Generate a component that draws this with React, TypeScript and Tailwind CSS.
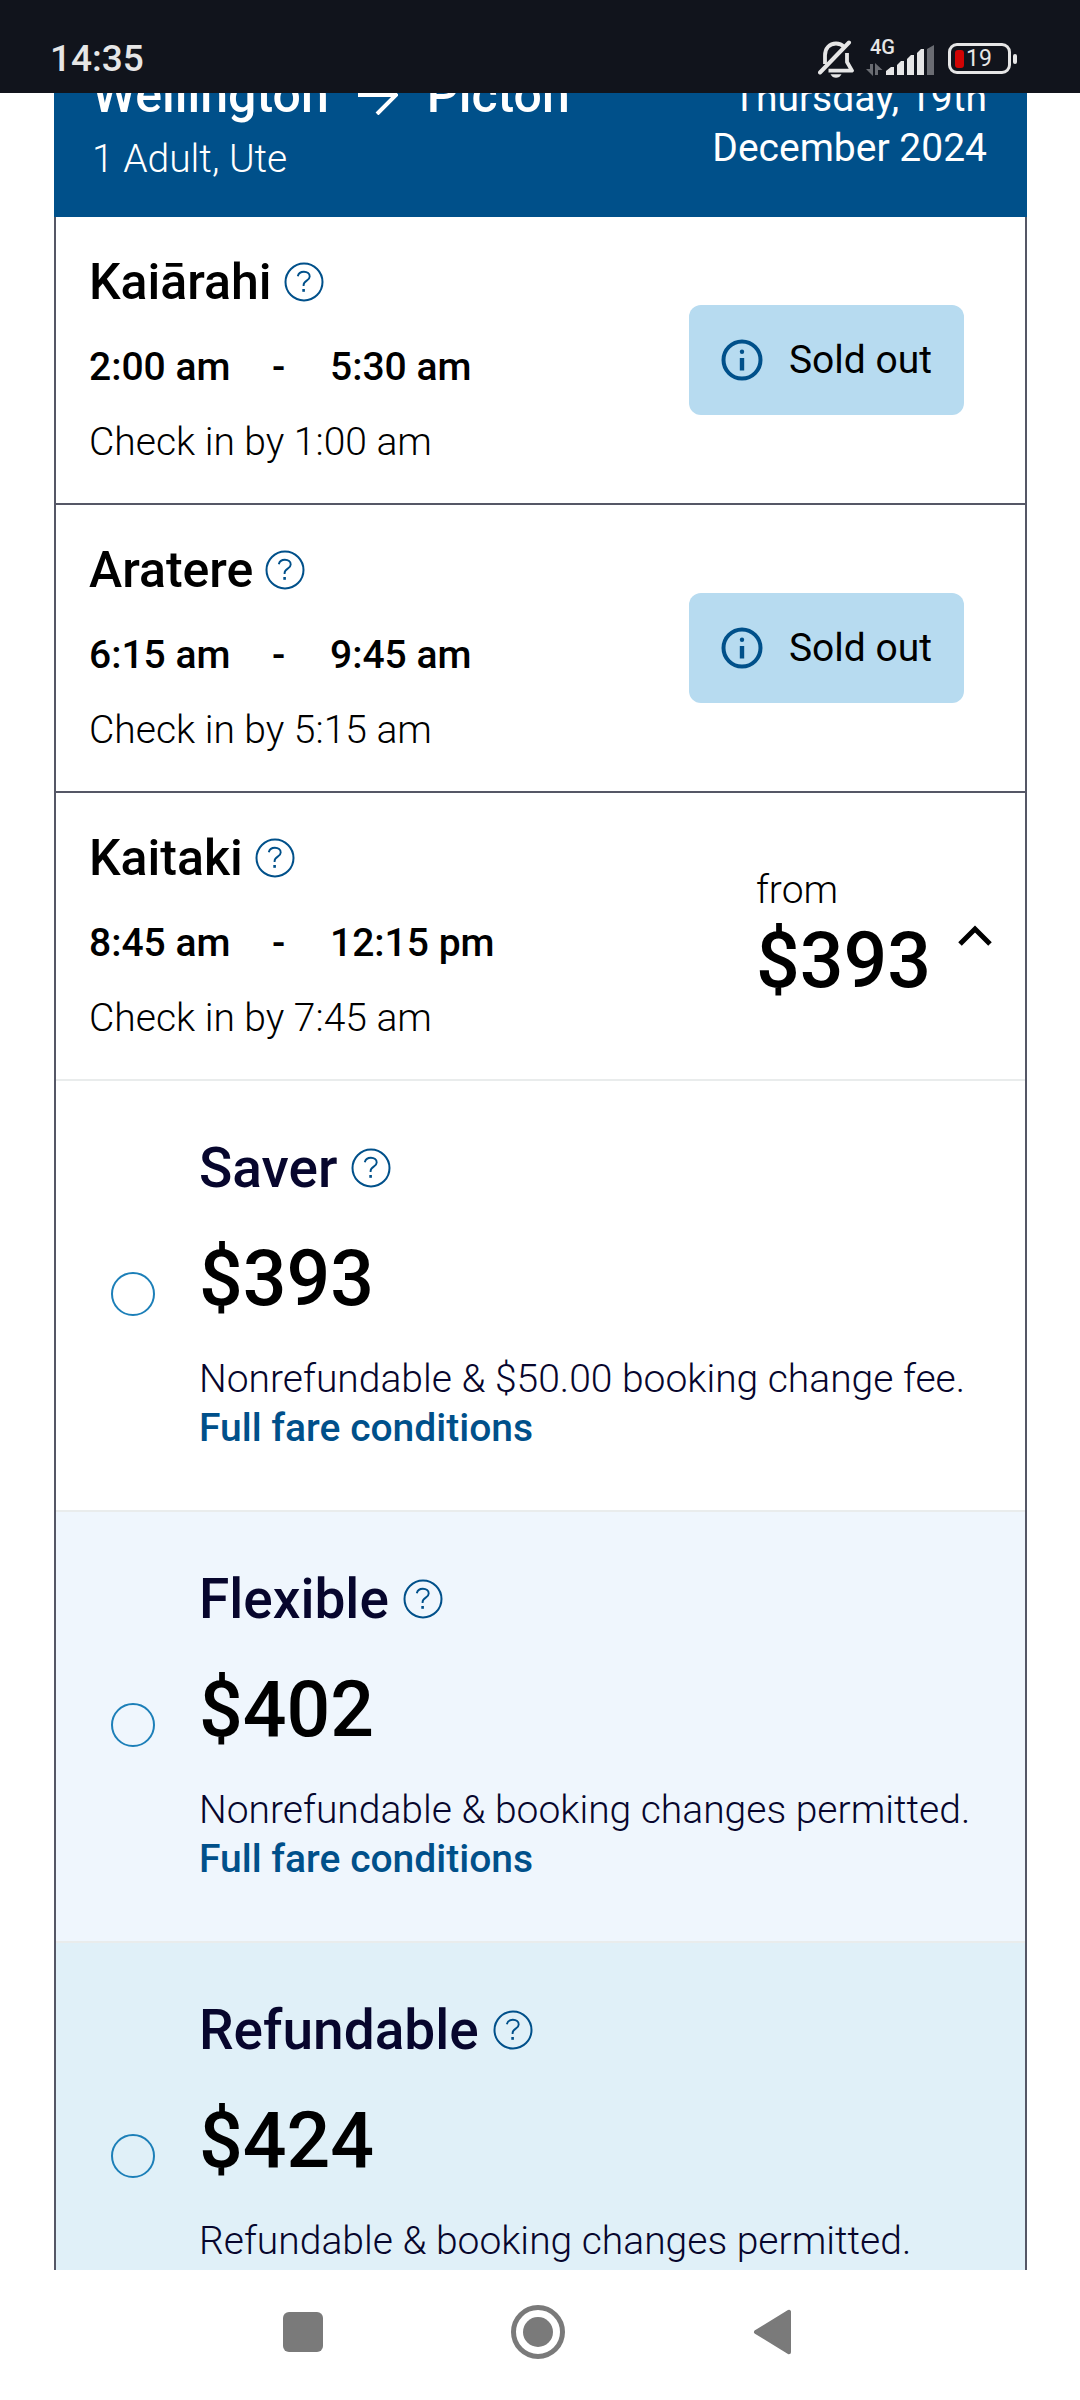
import React, { useState } from 'react';

type Sailing = { ship: string; departs: string; arrives: string; checkIn: string; from?: string };
type Fare = {
  id: string;
  name: string;
  price: string;
  terms: string;
  link?: string;
  tone: string;
};

const sailings: Sailing[] = [
  { ship: 'Kaiārahi', departs: '2:00 am', arrives: '5:30 am', checkIn: '1:00 am' },
  { ship: 'Aratere', departs: '6:15 am', arrives: '9:45 am', checkIn: '5:15 am' },
  { ship: 'Kaitaki', departs: '8:45 am', arrives: '12:15 pm', checkIn: '7:45 am', from: '$393' },
];

const fares: Fare[] = [
  {
    id: 'saver',
    name: 'Saver',
    price: '$393',
    terms: 'Nonrefundable & $50.00 booking change fee.',
    link: 'Full fare conditions',
    tone: 'bg-white',
  },
  {
    id: 'flexible',
    name: 'Flexible',
    price: '$402',
    terms: 'Nonrefundable & booking changes permitted.',
    link: 'Full fare conditions',
    tone: 'bg-[#eff6fd]',
  },
  {
    id: 'refundable',
    name: 'Refundable',
    price: '$424',
    terms: 'Refundable & booking changes permitted.',
    tone: 'bg-[#e0f0f8]',
  },
];

function HelpButton({ about }: { about: string }) {
  return (
    <button type="button" aria-label={`About ${about}`} className="shrink-0 text-[#00508a]">
      <svg className="block size-10" viewBox="0 0 40 40" fill="none" stroke="currentColor">
        <circle cx="20" cy="20" r="18.5" strokeWidth="2" />
        <path d="M13.8 14.2C14.6 11.2 17 9.8 19.9 9.8c3.4 0 5.8 1.9 5.8 4.7 0 4.6-6.1 3.6-6.1 8.6v1" strokeWidth="1.9" />
        <path d="M19.6 27v2.8" strokeWidth="2.6" />
      </svg>
    </button>
  );
}

function StatusBar() {
  return (
    <div className="flex h-[93px] shrink-0 items-center justify-between bg-[#11141c] pt-6 pr-[63px] pl-[50px] text-[#e6e6e6]">
      <time className="text-[37px] leading-[44px] font-medium">14:35</time>
      <div className="flex items-center gap-3">
        <svg className="h-10 w-9" viewBox="0 0 36 40" fill="none" stroke="currentColor" strokeWidth="3.8">
          <path d="M7 25V16.500C7 9 11.500 4.500 18 4.500c3.200 0 6 1.100 8 3.200" />
          <path d="M29 14v9l5 8.600H10.500" strokeLinejoin="round" />
          <path d="M2 33.500 31 3.500" strokeWidth="4" strokeLinecap="round" />
          <path d="M12.500 35.200h11c-1.200 2.400-3.200 3.600-5.500 3.600s-4.300-1.200-5.500-3.600z" fill="currentColor" stroke="none" />
        </svg>
        <div className="relative">
          <span className="absolute -top-1 left-1 text-[20px] leading-5 font-medium">4G</span>
          <svg className="h-9 w-[70px]" viewBox="0 0 70 36">
            <g fill="#6a6c72">
              <path d="M4 23h3v12L0 28h4z" />
              <path d="M9 34V22l7.500 7H12v5z" />
              <path d="M61 8l7-4v30h-7z" />
            </g>
            <path
              fill="currentColor"
              d="M20 30l5-4h3v8h-8zM31 24l4-4h3v14h-7zM41 18l4-4h3v20h-7zM51 12l4-4h3v26h-7z"
            />
          </svg>
        </div>
        <div className="flex items-center gap-0.5">
          <div className="flex h-[31px] w-[63px] items-center gap-0.5 rounded-[9px] border-3 border-[#e6e6e6] pl-1 text-[23px] leading-6">
            <span className="h-[18px] w-[9px] rounded-[3px] bg-[#d00404]" />
            19
          </div>
          <span className="h-[10px] w-1 rounded-sm bg-[#e6e6e6]" />
        </div>
      </div>
    </div>
  );
}

function TripHeader() {
  return (
    <header className="-mt-7 flex justify-between bg-[#00508a] pr-10 pb-[33px] pl-[38px] text-white">
      <div>
        <h1 className="flex items-center gap-[29px] text-[50px] leading-[60px] font-medium">
          Wellington
          <svg className="size-10 shrink-0" viewBox="0 0 40 40" fill="none" stroke="currentColor" strokeWidth="4">
            <path d="M0 20h37M19 1l19 19-19 19" />
          </svg>
          Picton
        </h1>
        <p className="pt-[10px] text-[39px] leading-[49px] font-light">1 Adult, Ute</p>
      </div>
      <p className="pt-2 text-right text-[39px] leading-[50px]">
        Thursday, 19th
        <br />
        December 2024
      </p>
    </header>
  );
}

function SailingRow({ sailing, open, onToggle }: { sailing: Sailing; open: boolean; onToggle: () => void }) {
  const { ship, departs, arrives, checkIn, from } = sailing;
  return (
    <section
      className={
        from
          ? 'flex items-center justify-between border-b-2 border-[#e9ecec] py-9 pr-8 pl-[33px]'
          : 'flex items-center justify-between border-b-2 border-[#555766] py-9 pr-[61px] pl-[33px]'
      }
    >
      <div>
        <h2 className="flex items-center gap-3 text-[50px] leading-[58px] font-medium">
          {ship}
          <HelpButton about={ship} />
        </h2>
        <p className="flex pt-[31px] text-[39px] leading-[50px] font-medium">
          <span className="w-[183px]">{departs}</span>
          <span className="w-[58px]">-</span>
          <span>{arrives}</span>
        </p>
        <p className="pt-[25px] text-[39px] leading-[50px] font-light">Check in by {checkIn}</p>
      </div>
      {from ? (
        <button type="button" aria-expanded={open} onClick={onToggle} className="flex items-center gap-[26px] text-left">
          <span>
            <span className="block text-[39px] leading-[50px] font-light">from</span>
            <span className="block text-[77px] leading-[92px] font-medium">{from}</span>
          </span>
          <svg className="h-6 w-9" viewBox="0 0 36 24" fill="none" stroke="currentColor" strokeWidth="5">
            <path d="M3 20 18 5l15 15" />
          </svg>
        </button>
      ) : (
        <div className="flex items-center gap-[26px] rounded-xl bg-[#b7dbf0] px-8 py-[30px] text-[39px] leading-[50px]">
          <svg className="size-[42px] text-[#00508a]" viewBox="0 0 42 42" fill="none" stroke="currentColor">
            <circle cx="21" cy="21" r="18.500" strokeWidth="4" />
            <path d="M21 19v12.500" strokeWidth="4.400" />
            <circle cx="21" cy="12.800" r="2.200" fill="currentColor" stroke="none" />
          </svg>
          Sold out
        </div>
      )}
    </section>
  );
}

function FareRow({ fare, checked, onSelect }: { fare: Fare; checked: boolean; onSelect: () => void }) {
  return (
    <section className={`flex items-center gap-11 border-b-2 border-[#e9ecec] pt-[54px] pr-8 pb-[57px] pl-[55px] ${fare.tone}`}>
      <input
        type="radio"
        name="fare"
        id={fare.id}
        checked={checked}
        onChange={onSelect}
        className="size-11 shrink-0 appearance-none rounded-full border-2 border-[#1c7fb8] checked:border-[12px]"
      />
      <div>
        <div className="flex items-center gap-[14px] text-[55px] leading-[66px] font-medium text-[#07062d]">
          <label htmlFor={fare.id}>{fare.name}</label>
          <HelpButton about={fare.name} />
        </div>
        <p className="pt-8 text-[77px] leading-[92px] font-medium">{fare.price}</p>
        <p className="pt-[30px] text-[39px] leading-[49px] font-light text-[#07062d]">{fare.terms}</p>
        {fare.link ? (
          <a href="#conditions" className="block text-[39px] leading-[49px] font-medium text-[#00508a]">
            {fare.link}
          </a>
        ) : (
          <div className="h-[49px]" />
        )}
      </div>
    </section>
  );
}

function NavigationBar() {
  return (
    <nav className="flex h-[130px] shrink-0 items-center justify-center gap-[188px] bg-white pr-1 pb-[6px] text-[#7a7a7a]">
      <button type="button" aria-label="Recent apps">
        <svg className="block size-10" viewBox="0 0 40 40" fill="currentColor">
          <rect width="40" height="40" rx="6" />
        </svg>
      </button>
      <button type="button" aria-label="Home">
        <svg className="block size-[54px]" viewBox="0 0 54 54" fill="currentColor">
          <circle cx="27" cy="27" r="24.500" fill="none" stroke="currentColor" strokeWidth="5" />
          <circle cx="27" cy="27" r="15" />
        </svg>
      </button>
      <button type="button" aria-label="Back">
        <svg className="block h-[46px] w-10" viewBox="0 0 40 46" fill="currentColor" stroke="currentColor" strokeWidth="4" strokeLinejoin="round">
          <path d="M3 23 36 2.800v40.400z" />
        </svg>
      </button>
    </nav>
  );
}

export default function App() {
  const [selected, setSelected] = useState('');
  const [open, setOpen] = useState(true);
  return (
    <div className="flex h-screen flex-col bg-white font-['Roboto',sans-serif] text-black">
      <StatusBar />
      <main className="min-h-0 flex-1 overflow-hidden pr-[53px] pl-[54px]">
        <TripHeader />
        <div className="border-x-2 border-[#555766]">
          {sailings.map((s) => (
            <SailingRow key={s.ship} sailing={s} open={open} onToggle={() => setOpen(!open)} />
          ))}
          {open &&
            fares.map((f) => (
              <FareRow key={f.id} fare={f} checked={selected === f.id} onSelect={() => setSelected(f.id)} />
            ))}
        </div>
      </main>
      <NavigationBar />
    </div>
  );
}
